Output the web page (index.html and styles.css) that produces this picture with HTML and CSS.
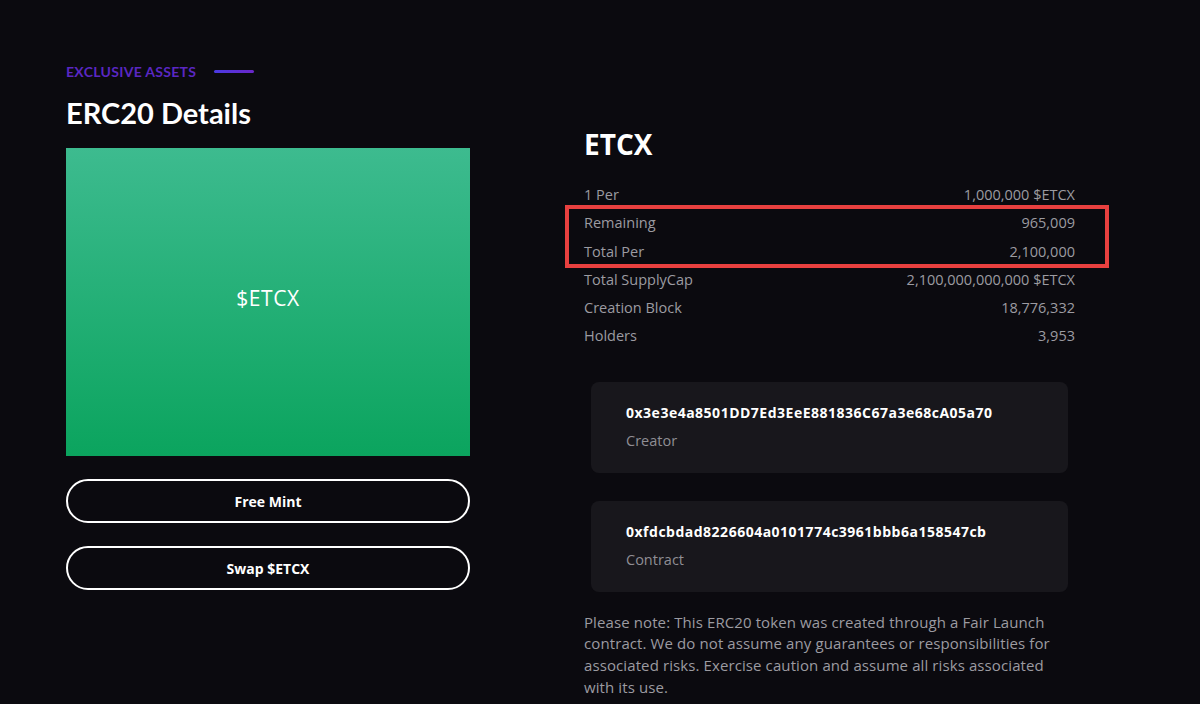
FILE: index.html
```html
<!DOCTYPE html>
<html lang="en">
<head>
<meta charset="utf-8">
<title>ERC20 Details</title>
<link rel="stylesheet" href="styles.css">
</head>
<body>
<main class="page">
  <section class="left">
    <div class="eyebrow">
      <span class="eyebrow-text">EXCLUSIVE ASSETS</span>
      <span class="eyebrow-line"></span>
    </div>
    <h1 class="title">ERC20 Details</h1>
    <div class="token-art">
      <span class="token-art-text">$ETCX</span>
    </div>
    <div class="actions">
      <button class="btn">Free Mint</button>
      <button class="btn">Swap $ETCX</button>
    </div>
  </section>
  <section class="right">
    <h2 class="token-name">ETCX</h2>
    <div class="stats">
      <div class="stat"><span>1 Per</span><span>1,000,000 $ETCX</span></div>
      <div class="stat"><span>Remaining</span><span>965,009</span></div>
      <div class="stat"><span>Total Per</span><span>2,100,000</span></div>
      <div class="stat"><span>Total SupplyCap</span><span>2,100,000,000,000 $ETCX</span></div>
      <div class="stat"><span>Creation Block</span><span>18,776,332</span></div>
      <div class="stat"><span>Holders</span><span>3,953</span></div>
      <div class="highlight"></div>
    </div>
    <div class="card">
      <div class="card-addr">0x3e3e4a8501DD7Ed3EeE881836C67a3e68cA05a70</div>
      <div class="card-label">Creator</div>
    </div>
    <div class="card">
      <div class="card-addr">0xfdcbdad8226604a0101774c3961bbb6a158547cb</div>
      <div class="card-label">Contract</div>
    </div>
    <p class="note">Please note: This ERC20 token was created through a Fair Launch contract. We do not assume any guarantees or responsibilities for associated risks. Exercise caution and assume all risks associated with its use.</p>
  </section>
</main>
</body>
</html>
```
FILE: styles.css
```css
* { box-sizing: border-box; }
html, body {
  margin: 0;
  padding: 0;
  background: #0b0a0f;
  height: 100%;
  overflow: hidden;
}
body {
  font-family: "Open Sans", "Liberation Sans", sans-serif;
  color: #fff;
}
.page {
  display: flex;
  gap: 114px;
  padding: 63px 0 0 66px;
}
.left {
  width: 404px;
  flex: none;
  display: flex;
  flex-direction: column;
}
.eyebrow {
  display: flex;
  align-items: center;
  gap: 18px;
  height: 16px;
}
.eyebrow-text {
  font-family: "Lato", sans-serif;
  font-size: 14px;
  font-weight: 700;
  color: #5a27c2;
  letter-spacing: 0.3px;
}
.eyebrow-line {
  width: 40px;
  height: 3px;
  border-radius: 2px;
  background: linear-gradient(90deg, #4a3ae2, #6a26c8);
}
.title {
  font-family: "Lato", sans-serif;
  font-size: 29px;
  font-weight: 700;
  line-height: 34px;
  margin: 17px 0 0;
  color: #fff;
}
.token-art {
  margin-top: 18px;
  height: 308px;
  background: linear-gradient(180deg, #3dbb8f 0%, #0ba45e 100%);
  display: flex;
  align-items: center;
  justify-content: center;
  padding-bottom: 8px;
}
.token-art-text {
  font-size: 21px;
  font-weight: 400;
  letter-spacing: 0.6px;
  color: #fff;
}
.actions {
  margin-top: 23px;
  display: flex;
  flex-direction: column;
  gap: 23px;
}
.btn {
  height: 44px;
  border: 2px solid #fff;
  border-radius: 22px;
  background: transparent;
  color: #fff;
  font-family: "Open Sans", sans-serif;
  font-size: 14px;
  font-weight: 700;
  cursor: pointer;
}
.right {
  width: 491px;
  flex: none;
  padding-top: 64px;
}
.token-name {
  font-family: "Open Sans", sans-serif;
  font-size: 28px;
  font-weight: 700;
  line-height: 34px;
  margin: 0;
}
.stats {
  position: relative;
  margin-top: 20px;
}
.stat {
  display: flex;
  justify-content: space-between;
  height: 28.3px;
  line-height: 28.3px;
  font-size: 14.5px;
  color: #9c9ba1;
}
.highlight {
  position: absolute;
  left: -19px;
  right: -34px;
  top: 24px;
  height: 63px;
  border: 4px solid #e8403f;
  pointer-events: none;
}
.card {
  margin: 28px 7px 0;
  background: #18171c;
  border-radius: 8px;
  padding: 21px 35px 18px;
}
.card + .card { margin-top: 28px; }
.stats + .card { margin-top: 31px; }
.card-addr {
  font-size: 14px;
  font-weight: 700;
  line-height: 20px;
  letter-spacing: 0.5px;
  color: #fff;
}
.card-label {
  margin-top: 4px;
  font-size: 14.5px;
  line-height: 28px;
  color: #8f8e94;
}
.note {
  margin: 20px 0 0;
  font-size: 15px;
  line-height: 21.6px;
  letter-spacing: 0.1px;
  color: #9c9ba1;
}
```
